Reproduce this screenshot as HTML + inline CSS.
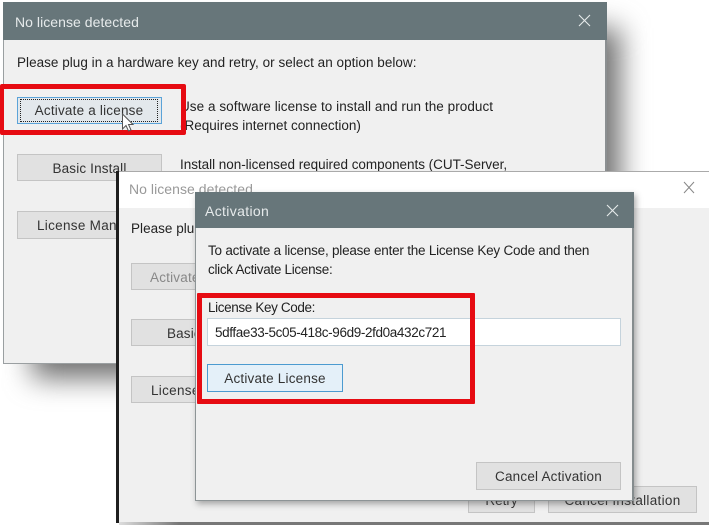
<!DOCTYPE html>
<html><head><meta charset="utf-8">
<style>
html,body{margin:0;padding:0;background:#fff;}
#p{position:relative;width:709px;height:525px;overflow:hidden;background:#fff;font-family:"Liberation Sans",sans-serif;font-size:13.5px;color:#222;filter:blur(.3px);}
#p div{position:absolute;box-sizing:border-box;white-space:nowrap;}
.t{line-height:18px;}
.b{background:#e1e1e1;border:1px solid #c4c4c4;text-align:center;line-height:27px;color:#333;overflow:hidden;}
.tb{background:#67767a;color:#e8eced;font-size:14px;}
svg{position:absolute;}
</style></head><body>
<div id="p">
<!-- shadow of dialog 1 -->
<div style="left:32px;top:28px;width:588px;height:350px;background:#6e6e6e;filter:blur(14px);"></div>

<!-- dialog 1 -->
<div style="left:3px;top:2px;width:604px;height:362px;background:#f0f0f0;border:1px solid #9a9fa1;border-top:0;border-right:2px solid #8b8f91;"></div>
<div class="tb" style="left:3px;top:2px;width:604px;height:38px;"></div>
<div class="t" style="left:15px;top:13px;color:#e6eaeb;font-size:14px;letter-spacing:.05px;">No license detected</div>
<svg style="left:578px;top:14px" width="13" height="13"><path d="M1 1L12 12M12 1L1 12" stroke="#e6eaeb" stroke-width="1.1" fill="none"/></svg>
<div class="t" style="left:17px;top:54px;letter-spacing:.03px;">Please plug in a hardware key and retry, or select an option below:</div>

<div class="b" style="left:17px;top:97px;width:145px;height:27px;background:#e3e8ec;border:1px solid #5ba3d8;"></div>
<div style="left:20px;top:99px;width:138px;height:23px;border:1px dotted #222;"></div>
<div class="t" style="left:20px;top:102px;width:138px;text-align:center;color:#333;letter-spacing:.2px;">Activate a license</div>
<div class="t" style="left:180px;top:98px;letter-spacing:.06px;">Use a software license to install and run the product</div>
<div class="t" style="left:180px;top:117px;letter-spacing:0;">(Requires internet connection)</div>

<div class="b" style="left:17px;top:154px;width:145px;height:27px;letter-spacing:.15px;">Basic Install</div>
<div class="t" style="left:180px;top:156px;letter-spacing:-.03px;">Install non-licensed required components (CUT-Server,</div>
<div class="b" style="left:17px;top:211px;width:145px;height:28px;text-align:left;padding-left:19px;letter-spacing:.3px;">License Manager</div>

<!-- red box 1 -->
<div style="left:0;top:84px;width:186px;height:51px;border:5px solid #e60b12;border-left-width:4px;border-radius:2px;"></div>
<!-- cursor -->
<svg style="left:121px;top:113px" width="14" height="20"><path d="M1.5 1V16L5 12.5L7.5 18L10 17L7.5 11.5H12Z" fill="#fff" stroke="#555" stroke-width="1"/></svg>

<!-- dialog 2 -->
<div style="left:116px;top:171px;width:593px;height:352px;background:#f0f0f0;"></div>
<div style="left:116px;top:171px;width:593px;height:37px;background:#fff;border-top:1px solid #aaa;"></div>
<div style="left:116px;top:171px;width:3px;height:352px;background:#1e1e1e;"></div>
<div style="left:119px;top:522px;width:590px;height:3px;background:linear-gradient(90deg,#ddd,#777 60px,#777);"></div>
<div class="t" style="left:129px;top:180px;color:#999;font-size:14px;letter-spacing:.05px;">No license detected</div>
<svg style="left:683px;top:181px" width="12" height="13"><path d="M1 1L11 12M11 1L1 12" stroke="#888" stroke-width="1" fill="none"/></svg>
<div class="t" style="left:131px;top:220px;letter-spacing:.03px;">Please plug in a hardware</div>
<div class="b" style="left:131px;top:263px;width:145px;height:27px;color:#888;text-align:left;padding-left:18px;letter-spacing:.2px;">Activate a license</div>
<div class="b" style="left:131px;top:319px;width:145px;height:27px;text-align:left;padding-left:35px;letter-spacing:.15px;">Basic Install</div>
<div class="b" style="left:131px;top:376px;width:145px;height:27px;text-align:left;padding-left:19px;letter-spacing:.3px;">License Manager</div>
<div class="b" style="left:468px;top:486px;width:67px;height:27px;">Retry</div>
<div class="b" style="left:548px;top:486px;width:149px;height:27px;letter-spacing:.3px;">Cancel Installation</div>

<!-- dialog 3 -->
<div style="left:195px;top:192px;width:439px;height:309px;background:#f0f0f0;border:1px solid #8d9496;border-right:2px solid #858c8e;box-shadow:2px 3px 6px rgba(70,70,70,.45);"></div>
<div class="tb" style="left:195px;top:192px;width:439px;height:36px;"></div>
<div class="t" style="left:205px;top:202px;color:#e6eaeb;font-size:14px;letter-spacing:.35px;">Activation</div>
<svg style="left:606px;top:204px" width="13" height="13"><path d="M1 1L12 12M12 1L1 12" stroke="#e6eaeb" stroke-width="1.1" fill="none"/></svg>
<div class="t" style="left:208px;top:242px;letter-spacing:-.22px;">To activate a license, please enter the License Key Code and then</div>
<div class="t" style="left:208px;top:261px;letter-spacing:-.3px;">click Activate License:</div>
<div class="t" style="left:208px;top:299px;letter-spacing:-.37px;">License Key Code:</div>
<div style="left:207px;top:318px;width:414px;height:28px;background:#fff;border:1px solid #c5d3dc;"></div>
<div class="t" style="left:215px;top:324px;letter-spacing:-.37px;">5dffae33-5c05-418c-96d9-2fd0a432c721</div>
<div class="b" style="left:207px;top:364px;width:136px;height:28px;background:#e4f0f9;border:1px solid #4c9bd0;line-height:27px;letter-spacing:.2px;">Activate License</div>
<div class="b" style="left:476px;top:462px;width:145px;height:28px;line-height:27px;letter-spacing:.2px;">Cancel Activation</div>

<!-- red box 2 -->
<div style="left:197px;top:293px;width:278px;height:111px;border:5px solid #e60b12;border-radius:1px;"></div>
</div>
</body></html>
